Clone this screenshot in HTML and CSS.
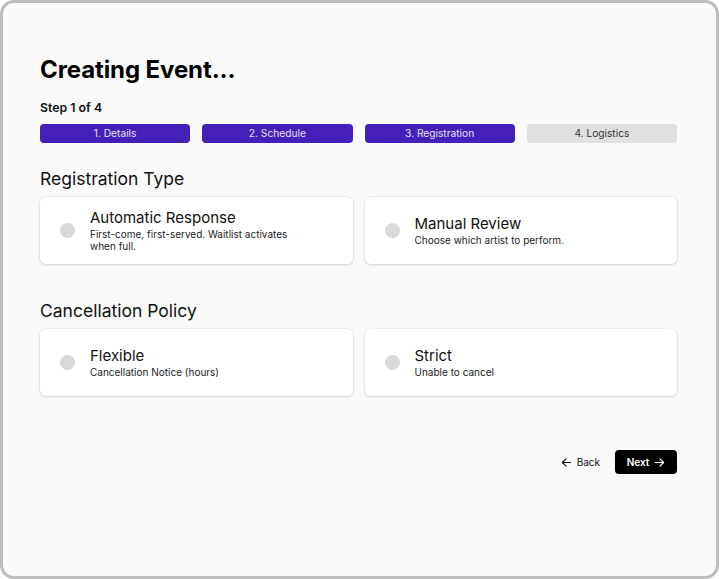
FILE: index.html
```html
<!DOCTYPE html>
<html>
<head>
<meta charset="utf-8">
<link rel="stylesheet" href="styles.css">
</head>
<body>
<div class="frame">
  <h1 class="title">Creating Event...</h1>
  <div class="step-label">Step 1 of 4</div>
  <div class="steps">
    <div class="step active">1. Details</div>
    <div class="step active">2. Schedule</div>
    <div class="step active">3. Registration</div>
    <div class="step">4. Logistics</div>
  </div>

  <h2 class="section">Registration Type</h2>
  <div class="options">
    <div class="card">
      <span class="radio"></span>
      <div class="text">
        <div class="opt-title">Automatic Response</div>
        <div class="opt-desc">First-come, first-served. Waitlist activates when full.</div>
      </div>
    </div>
    <div class="card">
      <span class="radio"></span>
      <div class="text">
        <div class="opt-title">Manual Review</div>
        <div class="opt-desc">Choose which artist to perform.</div>
      </div>
    </div>
  </div>

  <h2 class="section second">Cancellation Policy</h2>
  <div class="options">
    <div class="card">
      <span class="radio"></span>
      <div class="text">
        <div class="opt-title">Flexible</div>
        <div class="opt-desc">Cancellation Notice (hours)</div>
      </div>
    </div>
    <div class="card">
      <span class="radio"></span>
      <div class="text">
        <div class="opt-title">Strict</div>
        <div class="opt-desc">Unable to cancel</div>
      </div>
    </div>
  </div>

  <div class="actions">
    <button class="back">
      <svg width="11" height="11" viewBox="0 0 12 12" fill="none" stroke="#111" stroke-width="1.3" stroke-linecap="round" stroke-linejoin="round"><path d="M10.5 6H1.5M5.5 2L1.5 6L5.5 10"/></svg>
      <span>Back</span>
    </button>
    <button class="next">
      <span>Next</span>
      <svg width="11" height="11" viewBox="0 0 12 12" fill="none" stroke="#fff" stroke-width="1.3" stroke-linecap="round" stroke-linejoin="round"><path d="M1.5 6H10.5M6.5 2L10.5 6L6.5 10"/></svg>
    </button>
  </div>
</div>
</body>
</html>
```

FILE: styles.css
```css
* { box-sizing: border-box; }
html, body { margin: 0; padding: 0; background: #ffffff; }
body { font-family: Inter, "Noto Sans", sans-serif; color: #111; }

.frame {
  width: 719px;
  height: 579px;
  border: 3px solid #bdbdbd;
  border-radius: 14px;
  background: #fafafa;
  padding: 52px 39px 0 37px;
}

.title {
  margin: 0;
  font-size: 24px;
  line-height: 30px;
  font-weight: 700;
  letter-spacing: -0.1px;
  color: #000;
}

.step-label {
  margin-top: 15px;
  font-size: 12.3px;
  line-height: 16px;
  font-weight: 600;
  color: #111;
}

.steps {
  margin-top: 8px;
  display: grid;
  grid-template-columns: repeat(4, 1fr);
  gap: 12px;
}
.step {
  height: 19px;
  border-radius: 4px;
  background: #e0e0e0;
  color: #333;
  font-size: 10.2px;
  line-height: 19px;
  text-align: center;
}
.step.active {
  background: #4520b8;
  color: #e6e1ff;
}

.section {
  margin: 25px 0 0;
  font-size: 17.5px;
  line-height: 22px;
  font-weight: 400;
  color: #111;
}
.section.second { margin-top: 36px; }

.options {
  margin-top: 7px;
  display: grid;
  grid-template-columns: 1fr 1fr;
  gap: 12px;
}
.card {
  height: 67px;
  background: #fff;
  border-radius: 6px;
  box-shadow: 0 1px 3px rgba(0,0,0,0.14), 0 0 0 1px rgba(0,0,0,0.03);
  display: flex;
  align-items: center;
  padding: 0 20px;
  gap: 15px;
}
.radio {
  flex: none;
  width: 15px;
  height: 15px;
  border-radius: 50%;
  background: #d9d9d9;
}
.opt-title {
  font-size: 15px;
  line-height: 18px;
  color: #111;
}
.opt-desc {
  margin-top: 1px;
  font-size: 10px;
  line-height: 12px;
  color: #222;
  max-width: 215px;
}

.actions {
  margin-top: 54px;
  display: flex;
  justify-content: flex-end;
  align-items: center;
  gap: 15px;
}
.actions button {
  font-family: inherit;
  border: none;
  cursor: pointer;
  display: flex;
  align-items: center;
  gap: 5px;
  font-size: 10px;
}
.back {
  background: transparent;
  color: #111;
  padding: 0;
}
.next {
  width: 62px;
  height: 24px;
  justify-content: center;
  background: #000;
  color: #fff;
  border-radius: 4px;
  font-weight: 600;
  gap: 6px;
}
```
